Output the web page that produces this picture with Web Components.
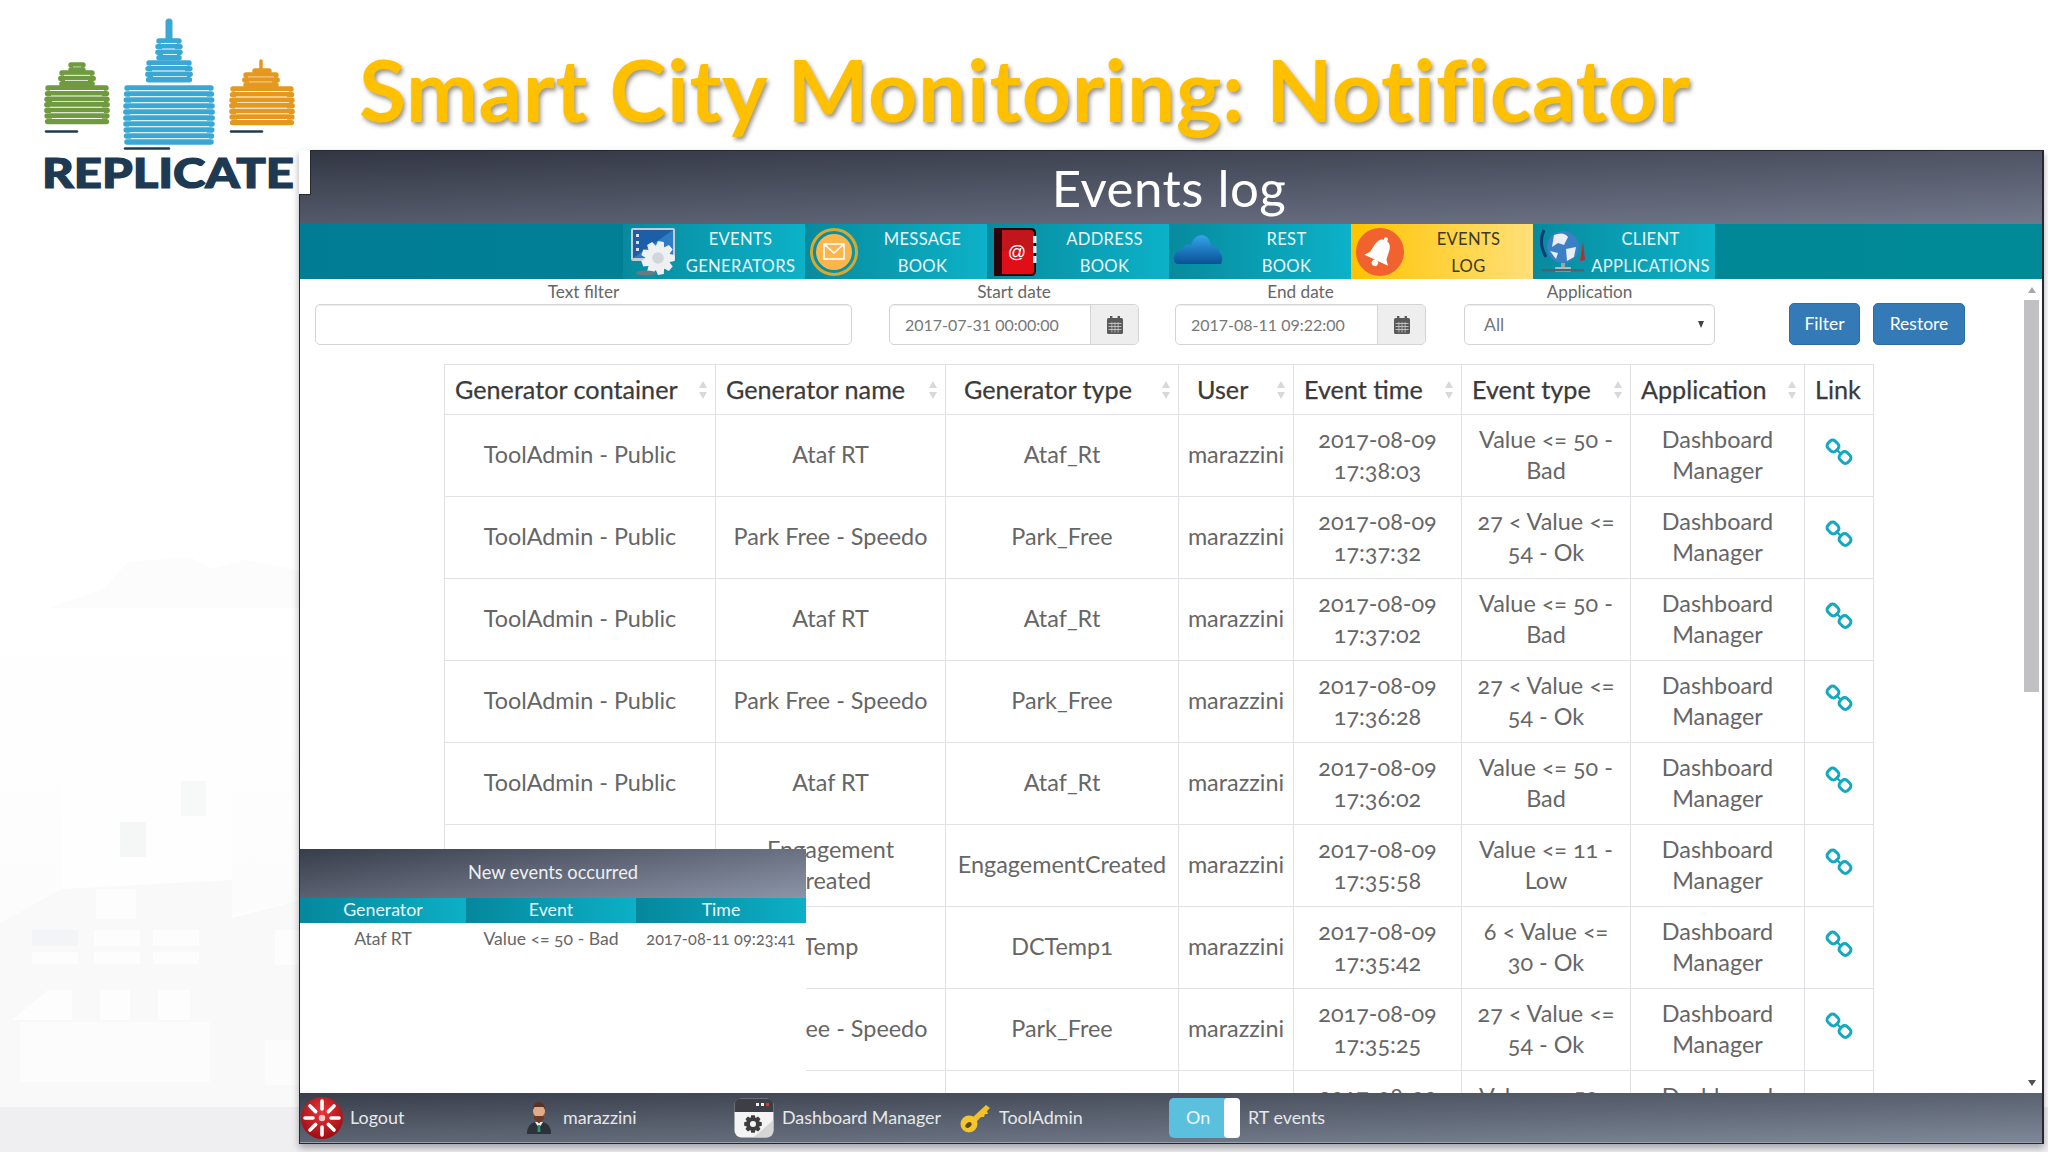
<!DOCTYPE html>
<html lang="en"><head><meta charset="utf-8"><title>Smart City Monitoring: Notificator</title>
<style>
html,body{margin:0;padding:0;background:#fff;}
body{width:2048px;height:1152px;overflow:hidden;font-family:Lato,"Open Sans",sans-serif;position:relative;}
</style></head><body>
<sc-backdrop></sc-backdrop>
<sc-masthead title-text="Smart City Monitoring: Notificator"></sc-masthead>
<sc-window>
  <sc-nav></sc-nav>
  <sc-filters></sc-filters>
  <sc-events-table></sc-events-table>
  <sc-popup></sc-popup>
  <sc-footer slot="footer"></sc-footer>
</sc-window>
<script>
const FONT='Lato,"Open Sans",sans-serif';
function gear(cx,cy,r,n,fill,inner){
  let p=[];const R=r,I=r*0.74;
  for(let i=0;i<n;i++){const a=i/n*Math.PI*2,d=Math.PI/n;
    [[a-d*.95,I],[a-d*.5,R],[a+d*.5,R],[a+d*.95,I]].forEach(([t,q])=>p.push((cx+q*Math.cos(t)).toFixed(1)+','+(cy+q*Math.sin(t)).toFixed(1)));}
  return `<polygon points="${p.join(' ')}" fill="${fill}"/>`+(inner?`<circle cx="${cx}" cy="${cy}" r="${r*.34}" fill="${inner}"/>`:'');
}
function define(name,html,init){
  customElements.define(name,class extends HTMLElement{
    constructor(){super();this.attachShadow({mode:'open'});}
    connectedCallback(){if(this._i)return;this._i=1;const s=this.shadowRoot;s.innerHTML=typeof html==='function'?html(this):html;if(init)init.call(this,s);}
  });
}
/* ---------- backdrop: pale watermark picture behind the slide ---------- */
define('sc-backdrop',`<style>:host{display:block;position:absolute;left:0;top:0;width:2048px;height:1152px;z-index:0}svg{display:block}</style>
<svg width="2048" height="1152" viewBox="0 0 2048 1152">
<defs><linearGradient id="g" x1="0" y1="0" x2="0" y2="1"><stop offset="0" stop-color="#fff"/><stop offset="1" stop-color="#fcfcfd"/></linearGradient></defs>
<rect width="2048" height="1152" fill="#fff"/>
<path d="M50 608 L105 588 L128 562 L190 557 L212 569 L245 560 L300 570 V608Z" fill="#fcfcfd"/>
<rect x="0" y="608" width="300" height="330" fill="url(#g)"/>
<path d="M0 923 L62 889 L62 770 L232 755 L232 915 L300 900 V1107 H0Z" fill="#fefefe"/>
<path d="M0 923 L62 889 L232 880 L232 918 L300 900 V1107 H0Z" fill="#f9f9fa"/>
<rect x="181" y="781" width="25" height="35" fill="#f7f8f8"/><rect x="120" y="822" width="26" height="35" fill="#f5f7f7"/>
<rect x="96" y="889" width="40" height="30" fill="#fdfdfe"/>
<rect x="32" y="930" width="46" height="16" fill="#f2f4f8"/><rect x="32" y="952" width="46" height="12" fill="#fdfdfe"/>
<rect x="94" y="930" width="46" height="16" fill="#fdfdfe"/><rect x="94" y="952" width="46" height="12" fill="#fdfdfe"/>
<rect x="153" y="930" width="46" height="16" fill="#fdfdfe"/><rect x="153" y="952" width="46" height="12" fill="#fdfdfe"/>
<rect x="275" y="930" width="25" height="35" fill="#fdfdfe"/>
<path d="M12 1020 L48 990 H72 V1020ZM100 990 H130 V1020 H100ZM158 990 H190 V1020 H158Z" fill="#fdfdfe"/>
<rect x="20" y="1022" width="190" height="60" fill="#fcfcfd"/><rect x="265" y="1040" width="35" height="45" fill="#fcfcfd"/>
<rect x="0" y="1107" width="2048" height="45" fill="#efeff1"/>
</svg>`);
/* ---------- masthead ---------- */
function logoSvg(){
  const rows=(x1,x2,y1,y2,step,c)=>{let o='';let i=0;for(let y=y1;y<=y2+.01;y+=step,i++){
    const b=Math.sin((y-y1)/(y2-y1+.01)*Math.PI)*1.2;
    o+=`<line x1="${x1-b}" x2="${x2+b}" y1="${y}" y2="${y}" stroke="${c}"/>`;
    if(y+step<=y2+.01){o+=`<line x1="${x1+2+(i%3)}" x2="${x2-2-(i%2)*2}" y1="${y+step/2}" y2="${y+step/2}" stroke="#fff" stroke-width="1.7" stroke-linecap="butt"/>`;}
  }return o;};
  const blue='#3aa8d4',green='#6f9a40',or='#e5981e';
  return `<svg width="300" height="196" viewBox="0 0 300 196" stroke-width="5.4" stroke-linecap="round">
  <line x1="169" x2="169" y1="22" y2="38" stroke="${blue}" stroke-width="7"/>
  ${rows(159,179,41,58,5.6,blue)}${rows(149,189,63,82,5.6,blue)}${rows(127,211,88,143,6,blue)}
  ${rows(71,83,65,70,5,green)}${rows(62,92,73,84,5.4,green)}${rows(48,106,88,126,5.6,green)}
  <line x1="261" x2="261" y1="61" y2="70" stroke="${or}" stroke-width="3.5"/>
  ${rows(255,269,71,71,5,or)}${rows(246,276,75,85,5,or)}${rows(233,291,89,127,5.6,or)}
  <line x1="46" x2="77" y1="131.5" y2="131.5" stroke="#1f3a52" stroke-width="2.4"/>
  <line x1="231" x2="262" y1="131.5" y2="131.5" stroke="#1f3a52" stroke-width="2.4"/>
  <line x1="125" x2="169" y1="148.5" y2="148.5" stroke="#1f3a52" stroke-width="2.4"/>
  <text x="42" y="188" font-family="Lato,'Liberation Sans',sans-serif" font-weight="900" font-size="41" textLength="252" lengthAdjust="spacingAndGlyphs" fill="#1e3a52" stroke="#1e3a52" stroke-width="1.2">REPLICATE</text>
  </svg>`;
}
define('sc-masthead',el=>`<style>
:host{display:flex;position:relative;z-index:1;height:150px;align-items:flex-start}
.logo{width:300px;height:196px;flex:none;position:relative;z-index:2}
.t{margin:37px 0 0 59px;font:700 86px/1.2 ${FONT};letter-spacing:.6px;color:#ffc000;text-shadow:2px 3px 4px rgba(70,60,40,.55);white-space:nowrap}
</style><div class="logo">${logoSvg()}</div><div class="t">${el.getAttribute('title-text')}</div>`);
/* ---------- window ---------- */
define('sc-window',`<style>
:host{display:flex;flex-direction:column;position:relative;z-index:1;margin-left:299px;width:1745px;height:994px;box-sizing:border-box;
 border:solid #26282d;border-width:1px 2px 1px 1px;background:#fff;box-shadow:0 4px 7px rgba(70,70,80,.45);color:#555}
.head{height:73px;flex:none;display:flex;align-items:center;justify-content:center;padding-right:4px;color:#fff;font:400 51px/1 ${FONT};letter-spacing:.5px;
 background:linear-gradient(178deg,#323643,#71788b)}
.main{flex:1;min-height:0;position:relative;overflow:hidden}
.notch{position:absolute;left:-1px;top:-1px;width:11px;height:44px;background:#fff;border:solid #26282d;border-width:0 1px 1px 0;z-index:3}
.bar{position:absolute;right:0;top:0;bottom:0;width:20px;background:#fff;z-index:1}
.thumb{position:absolute;left:2px;top:21px;width:15px;height:392px;background:#c1c0c3}
.u,.d{position:absolute;left:6px;width:0;height:0;border:4px solid transparent}
.u{top:8px;border-bottom:6px solid #a8a8a8;border-top:0}.d{bottom:7px;border-top:6px solid #505050;border-bottom:0}
</style>
<div class="notch"></div>
<div class="head">Events log</div>
<slot name="nav"></slot>
<div class="main"><slot></slot><div class="bar"><div class="u"></div><div class="thumb"></div><div class="d"></div></div></div>
<slot name="footer"></slot>`,function(){this.querySelector('sc-nav').slot='nav';});
/* ---------- nav ---------- */
const icons={
 gen:`<svg width="50" height="50" viewBox="0 0 50 50"><rect x="3" y="1" width="44" height="33" rx="2" fill="#c8ccd0"/><rect x="5" y="3" width="40" height="28" fill="#1c5fa8"/><path d="M5 31 L45 3 V31Z" fill="#2d7cc4"/><rect x="8" y="7" width="3" height="3" fill="#dde"/><rect x="8" y="14" width="3" height="3" fill="#dde"/><rect x="8" y="21" width="3" height="3" fill="#dde"/>${gear(30,31,17,9,'#eef0f2','#d2d6da')}<ellipse cx="18" cy="46" rx="10" ry="2.5" fill="#6a7a80"/></svg>`,
 msg:`<svg width="50" height="50" viewBox="0 0 50 50"><circle cx="24" cy="25" r="22.5" fill="none" stroke="#d9a92c" stroke-width="3"/><circle cx="24" cy="25" r="18" fill="#fdb54c"/><rect x="14" y="17" width="20" height="15" fill="none" stroke="#fff" stroke-width="1.6"/><path d="M14 17 L24 26 L34 17" fill="none" stroke="#fff" stroke-width="1.6"/></svg>`,
 book:`<svg width="50" height="50" viewBox="0 0 50 50"><path d="M2 1 H39 Q44 1 44 6 V44 Q44 49 39 49 H2Z" fill="#2a0406"/><path d="M10 3 H38 Q42 3 42 7 V43 Q42 47 38 47 H10Z" fill="#c2161c"/><path d="M10 24 H42 V43 Q42 47 38 47 H10Z" fill="#e00f17"/><rect x="41" y="9" width="3.5" height="7" fill="#eee"/><rect x="41" y="19" width="3.5" height="7" fill="#eee"/><rect x="41" y="29" width="3.5" height="7" fill="#eee"/><text x="25" y="31" font-family="'Liberation Sans',sans-serif" font-size="18" text-anchor="middle" fill="#fff">@</text></svg>`,
 cloud:`<svg width="50" height="50" viewBox="0 0 50 50"><defs><linearGradient id="c" x1="0" y1="0" x2="0" y2="1"><stop offset="0" stop-color="#34a6ec"/><stop offset="1" stop-color="#0a4f96"/></linearGradient></defs><path d="M4 37 Q0 37 0 31 Q0 24 8 23 Q10 16 17 18 Q20 8 28 8 Q36 9 37 19 Q44 18 46 26 Q50 30 47 37Z" fill="url(#c)"/></svg>`,
 bell:`<svg width="50" height="50" viewBox="0 0 50 50"><circle cx="24" cy="25" r="24" fill="#f0632f"/><g transform="rotate(25 24 25) translate(-1 0)" fill="#fff"><path d="M25 12 Q32 12 33 21 L34 29 L38 34 H12 L16 29 L17 21 Q18 12 25 12Z"/><circle cx="25" cy="37" r="3.2"/><circle cx="25" cy="11" r="2"/></g></svg>`,
 globe:`<svg width="50" height="50" viewBox="0 0 50 50"><path d="M6 3 Q0 16 8 30" fill="none" stroke="#123a78" stroke-width="3"/><path d="M42 34 L45 15 L47 33Z" fill="#c0282c"/><circle cx="25" cy="20" r="16" fill="#3b7fc4"/><path d="M16 8 Q26 4 30 10 L26 18 L20 16 L14 20Z M28 22 L38 20 L36 30 L29 34Z M12 24 L20 26 L18 32Z" fill="#e8eef4"/><rect x="23" y="36" width="4" height="6" fill="#9aa4ac"/><rect x="17" y="40" width="16" height="5" rx="1" fill="#b0b8be"/><rect x="4" y="42" width="42" height="2.4" fill="#54606a"/></svg>`
};
define('sc-nav-item',el=>`<style>
:host{display:flex;width:182px;height:55px;flex:none;align-items:center;background:linear-gradient(to right,#078a9e,#0cb2c8);color:#e8f6f8}
:host([active]){background:linear-gradient(to right,#ffc400,#ffe07a);color:#3d3a2a}
.i{width:50px;height:50px;flex:none;margin-left:5px}
.l{flex:1;text-align:center;font:400 16.6px/26.5px ${FONT};white-space:pre-line;letter-spacing:.3px;padding:2px 1px 0 0}
</style><div class="i">${icons[el.getAttribute('icon')]}</div><div class="l"><slot></slot></div>`);
define('sc-nav',`<style>:host{display:flex;justify-content:center;height:55px;flex:none;padding-right:5px;background:linear-gradient(to right,#007d95,#008a97)}</style><slot></slot>`,function(){
 [['gen','EVENTS\nGENERATORS'],['msg','MESSAGE\nBOOK'],['book','ADDRESS\nBOOK'],['cloud','REST\nBOOK'],['bell','EVENTS\nLOG',1],['globe','CLIENT\nAPPLICATIONS']].forEach(([ic,t,a])=>{
  const n=document.createElement('sc-nav-item');n.setAttribute('icon',ic);if(a)n.setAttribute('active','');n.textContent=t;this.appendChild(n);});
});
/* ---------- filters ---------- */
const cal=`<svg width="16" height="18" viewBox="0 0 16 18"><rect x="0" y="2" width="16" height="16" rx="1.5" fill="#5a5a5a"/><rect x="3" y="0" width="2.4" height="4" fill="#5a5a5a"/><rect x="10.6" y="0" width="2.4" height="4" fill="#5a5a5a"/><g fill="#c8c8c8"><rect x="1.5" y="7" width="13" height=".9"/><rect x="1.5" y="10" width="13" height=".9"/><rect x="1.5" y="13" width="13" height=".9"/><rect x="4.5" y="6" width=".8" height="10.5"/><rect x="7.6" y="6" width=".8" height="10.5"/><rect x="10.7" y="6" width=".8" height="10.5"/></g></svg>`;
define('sc-field',el=>{const k=el.getAttribute('kind'),v=el.getAttribute('value')||'';
 return `<style>
 :host{display:block;flex:none;font-family:${FONT}}
 label{display:block;height:25px;line-height:26px;text-align:center;font-size:17.2px;color:#666}
 .b{height:41px;box-sizing:border-box;display:flex;align-items:center;border:1px solid #d4d4d6;border-radius:5px;background:#fff;font-size:16px;color:#777;box-shadow:inset 0 1px 1px rgba(0,0,0,.07)}
 .v{flex:1;padding-left:15px}.a{width:47px;height:100%;display:flex;align-items:center;justify-content:center;background:#eee;border-left:1px solid #d4d4d6;border-radius:0 4px 4px 0}
 .t{width:0;height:0;border:3.5px solid transparent;border-top:7px solid #444;border-bottom:0;margin-right:10px}
 .sel{padding-left:19px;font-size:17.6px}
 </style><label>${el.getAttribute('label')}</label><div class="b"><span class="v${k==='select'?' sel':''}">${v}</span>${k==='date'?`<span class="a">${cal}</span>`:k==='select'?'<span class="t"></span>':''}</div>`;});
define('sc-btn',`<style>:host{display:flex;flex:none;align-items:center;justify-content:center;height:42px;margin-top:24px;box-sizing:border-box;background:#337ab7;border:1px solid #2e6da4;border-radius:5px;color:#fff;font:400 17.5px/1 ${FONT}}</style><slot></slot>`);
define('sc-filters',`<style>:host{display:flex;height:66px;padding-left:15px}</style>
<sc-field label="Text filter" style="width:537px"></sc-field>
<sc-field label="Start date" kind="date" value="2017-07-31 00:00:00" style="width:250px;margin-left:37px"></sc-field>
<sc-field label="End date" kind="date" value="2017-08-11 09:22:00" style="width:251px;margin-left:36px"></sc-field>
<sc-field label="Application" kind="select" value="All" style="width:251px;margin-left:38px"></sc-field>
<sc-btn style="width:71px;margin-left:74px">Filter</sc-btn>
<sc-btn style="width:92px;margin-left:13px">Restore</sc-btn>`);
/* ---------- table ---------- */
const V50='Value <= 50 -\nBad',V54='27 < Value <=\n54 - Ok',T='ToolAdmin - Public',DM='Dashboard\nManager';
const ROWS=[
 [T,'Ataf RT','Ataf_Rt','17:38:03',V50],[T,'Park Free - Speedo','Park_Free','17:37:32',V54],
 [T,'Ataf RT','Ataf_Rt','17:37:02',V50],[T,'Park Free - Speedo','Park_Free','17:36:28',V54],
 [T,'Ataf RT','Ataf_Rt','17:36:02',V50],['','Engagement\nCreated','EngagementCreated','17:35:58','Value <= 11 -\nLow'],
 ['','Temp','DCTemp1','17:35:42','6 < Value <=\n30 - Ok'],['','Park Free - Speedo','Park_Free','17:35:25',V54]];
const esc=s=>s.replace(/&/g,'&amp;').replace(/</g,'&lt;');
const linkIcon=`<svg width="28" height="28" viewBox="0 0 28 28" fill="none" stroke="#15a8bf" stroke-width="3"><rect x="2.5" y="3" width="11" height="10" rx="3.6" transform="rotate(45 8 8)"/><rect x="14.5" y="14.5" width="11" height="10" rx="3.6" transform="rotate(45 20 19.5)"/><line x1="12" y1="12" x2="15.5" y2="15.5" stroke-width="2.4"/></svg>`;
const sortI=`<svg class="s" width="10" height="20" viewBox="0 0 10 20"><path d="M5 1 L9 8 H1Z M5 19 L9 12 H1Z" fill="#d8d8da"/></svg>`;
const HEAD=['Generator container','Generator name','Generator type','User','Event time','Event type','Application','Link'];
const WID=[271,230,233,115,168,169,174,69];
define('sc-events-table',()=>`<style>
:host{display:block;margin:19px 0 0 144px;width:1429px;font-family:${FONT};font-variant-numeric:oldstyle-nums}
table{border-collapse:collapse;table-layout:fixed;width:1429px}
th,td{border:1px solid #e3e1e5;padding:0 0 2px}
th{height:47px;text-align:left;padding-left:10px;font:400 25.2px ${FONT};color:#3a3a3a;position:relative;-webkit-text-stroke:.25px #3a3a3a}
th.x{padding-left:18px}
th .s{position:absolute;right:7px;top:15px}
td{height:79px;text-align:center;font-size:23.4px;line-height:30.6px;color:#666;white-space:pre-line;letter-spacing:0}
td svg{display:block;margin:-5px auto 0}
.clip td{vertical-align:top;padding-top:10px}
</style><table><colgroup>${WID.map(w=>`<col style="width:${w}px">`).join('')}</colgroup>
<tr>${HEAD.map((h,i)=>`<th${i==2||i==3?' class="x"':''}>${h}${i<7?sortI:''}</th>`).join('')}</tr>
${ROWS.map(r=>`<tr><td>${r[0]}</td><td>${esc(r[1])}</td><td>${r[2]}</td><td>marazzini</td><td>2017-08-09\n${r[3]}</td><td>${esc(r[4])}</td><td>${DM}</td><td>${linkIcon}</td></tr>`).join('')}
<tr class="clip"><td></td><td></td><td></td><td></td><td>2017-08-09</td><td>Value &lt;= 50 -</td><td>Dashboard</td><td></td></tr>
</table>`);
/* ---------- popup ---------- */
define('sc-popup',`<style>
:host{display:block;position:absolute;left:0;bottom:0;width:506px;height:244px;background:#fff;z-index:2;font-family:${FONT}}
.h{height:49px;box-sizing:border-box;padding-bottom:3px;display:flex;align-items:center;justify-content:center;color:#eef0f3;font-size:18.3px;background:linear-gradient(172deg,#383d4a,#8c94a8)}
.r{display:grid;grid-template-columns:166px 170px 170px;text-align:center}
.r.c div{height:25px;line-height:22px;font-size:17.8px;color:#e8f6f8;background:linear-gradient(to right,#05879c,#0cb0c6)}
.r.d div{padding-top:6px;line-height:20px;font-size:17.6px;color:#666;font-variant-numeric:oldstyle-nums;white-space:nowrap}
.r.d .tm{font-size:16.3px;letter-spacing:.1px}
</style><div class="h">New events occurred</div>
<div class="r c"><div>Generator</div><div>Event</div><div>Time</div></div>
<div class="r d"><div>Ataf RT</div><div>Value &lt;= 50 - Bad</div><div class="tm">2017-08-11 09:23:41</div></div>`);
/* ---------- footer ---------- */
const fIcons={
 out:`<svg width="44" height="44" viewBox="0 0 44 44"><defs><radialGradient id="r" cx=".5" cy=".35" r=".7"><stop offset="0" stop-color="#e8353a"/><stop offset="1" stop-color="#98090e"/></radialGradient></defs><circle cx="22" cy="22" r="21" fill="url(#r)"/>${[0,45,90,135,180,225,270,315].map(a=>`<line x1="22" y1="13" x2="22" y2="5" stroke="#fff" stroke-width="3.6" stroke-linecap="round" transform="rotate(${a} 22 22)"/>`).join('')}<circle cx="22" cy="22" r="3.2" fill="#f8c8c8"/></svg>`,
 man:`<svg width="26" height="34" viewBox="0 0 26 34"><path d="M1 33 Q1 23 9 21 H17 Q25 23 25 33Z" fill="#2c3238"/><path d="M9 21 L13 27 L17 21Z" fill="#f2f2f2"/><path d="M12 24 H14 L14.6 31 H11.4Z" fill="#1f9a80"/><path d="M7 10 Q7 2 13 2 Q19 2 19 10 L18 17 L13 22 L8 17Z" fill="#e0ab88"/><path d="M7 9 Q7 1 13 1 Q19 1 19 9 L17.4 6 H8.6Z" fill="#5a3222"/><path d="M7.2 12 L9 15 H17 L18.8 12 L18 18 L13 22.5 L8 18Z" fill="#6a3c28"/></svg>`,
 dash:`<svg width="40" height="40" viewBox="0 0 40 40"><rect x="0.5" y="0.5" width="39" height="39" rx="7" fill="#f4f4f4"/><path d="M0.5 14 V7.5 Q0.5 .5 7.5 .5 H32.5 Q39.5 .5 39.5 7.5 V14Z" fill="#3c3f46"/><rect x="22" y="5" width="3" height="3" fill="#eee"/><rect x="27" y="5" width="3" height="3" fill="#eee"/><rect x="32" y="5" width="3" height="3" fill="#d33"/>${gear(19,26,9,8,'#3d3d3d','#f4f4f4')}<path d="M27 33 L39.5 22 V32 Q39.5 39.5 32 39.5 H19Z" fill="#c9c9c9" opacity=".7"/></svg>`,
 key:`<svg width="32" height="32" viewBox="0 0 32 32"><path d="M13 15 L26 3 L30 6 L27 9 L28 12 L25 12 L24 15 L21 15 L16 20Z" fill="#f0c030"/><circle cx="9" cy="22" r="8.5" fill="#f3c52e"/><ellipse cx="8.5" cy="23" rx="3.5" ry="2.4" fill="#5c4a10" transform="rotate(-40 8.5 23)"/></svg>`
};
define('sc-footer',`<style>
:host{display:grid;grid-template-columns:226px 208px 226px 209px 1fr;height:50px;flex:none;align-items:center;color:#e6e8ea;font:400 17.9px/1 ${FONT};background:linear-gradient(178.5deg,#393e4b,#7e8898);position:relative;z-index:3;border-bottom:1px solid #9aa3ad;box-sizing:border-box}
.c{display:flex;align-items:center;height:50px}
.c svg{display:block;flex:none}
.t{width:71px;height:40px;box-sizing:border-box;background:#5bc0de;border-radius:5px;position:relative;display:flex;align-items:center;padding-left:17px;color:#eaf7fb}
.t i{position:absolute;right:0;top:0;width:16px;height:40px;background:#fff;border-radius:4px}
</style>
<div class="c">${fIcons.out}<span style="margin-left:6px">Logout</span></div>
<div class="c"><span style="width:24px;margin-right:13px;display:block">${fIcons.man}</span><span>marazzini</span></div>
<div class="c">${fIcons.dash}<span style="margin-left:8px">Dashboard Manager</span></div>
<div class="c">${fIcons.key}<span style="margin-left:7px">ToolAdmin</span></div>
<div class="c"><div class="t">On<i></i></div><span style="margin-left:8px">RT events</span></div>`);
</script>
</body></html>
